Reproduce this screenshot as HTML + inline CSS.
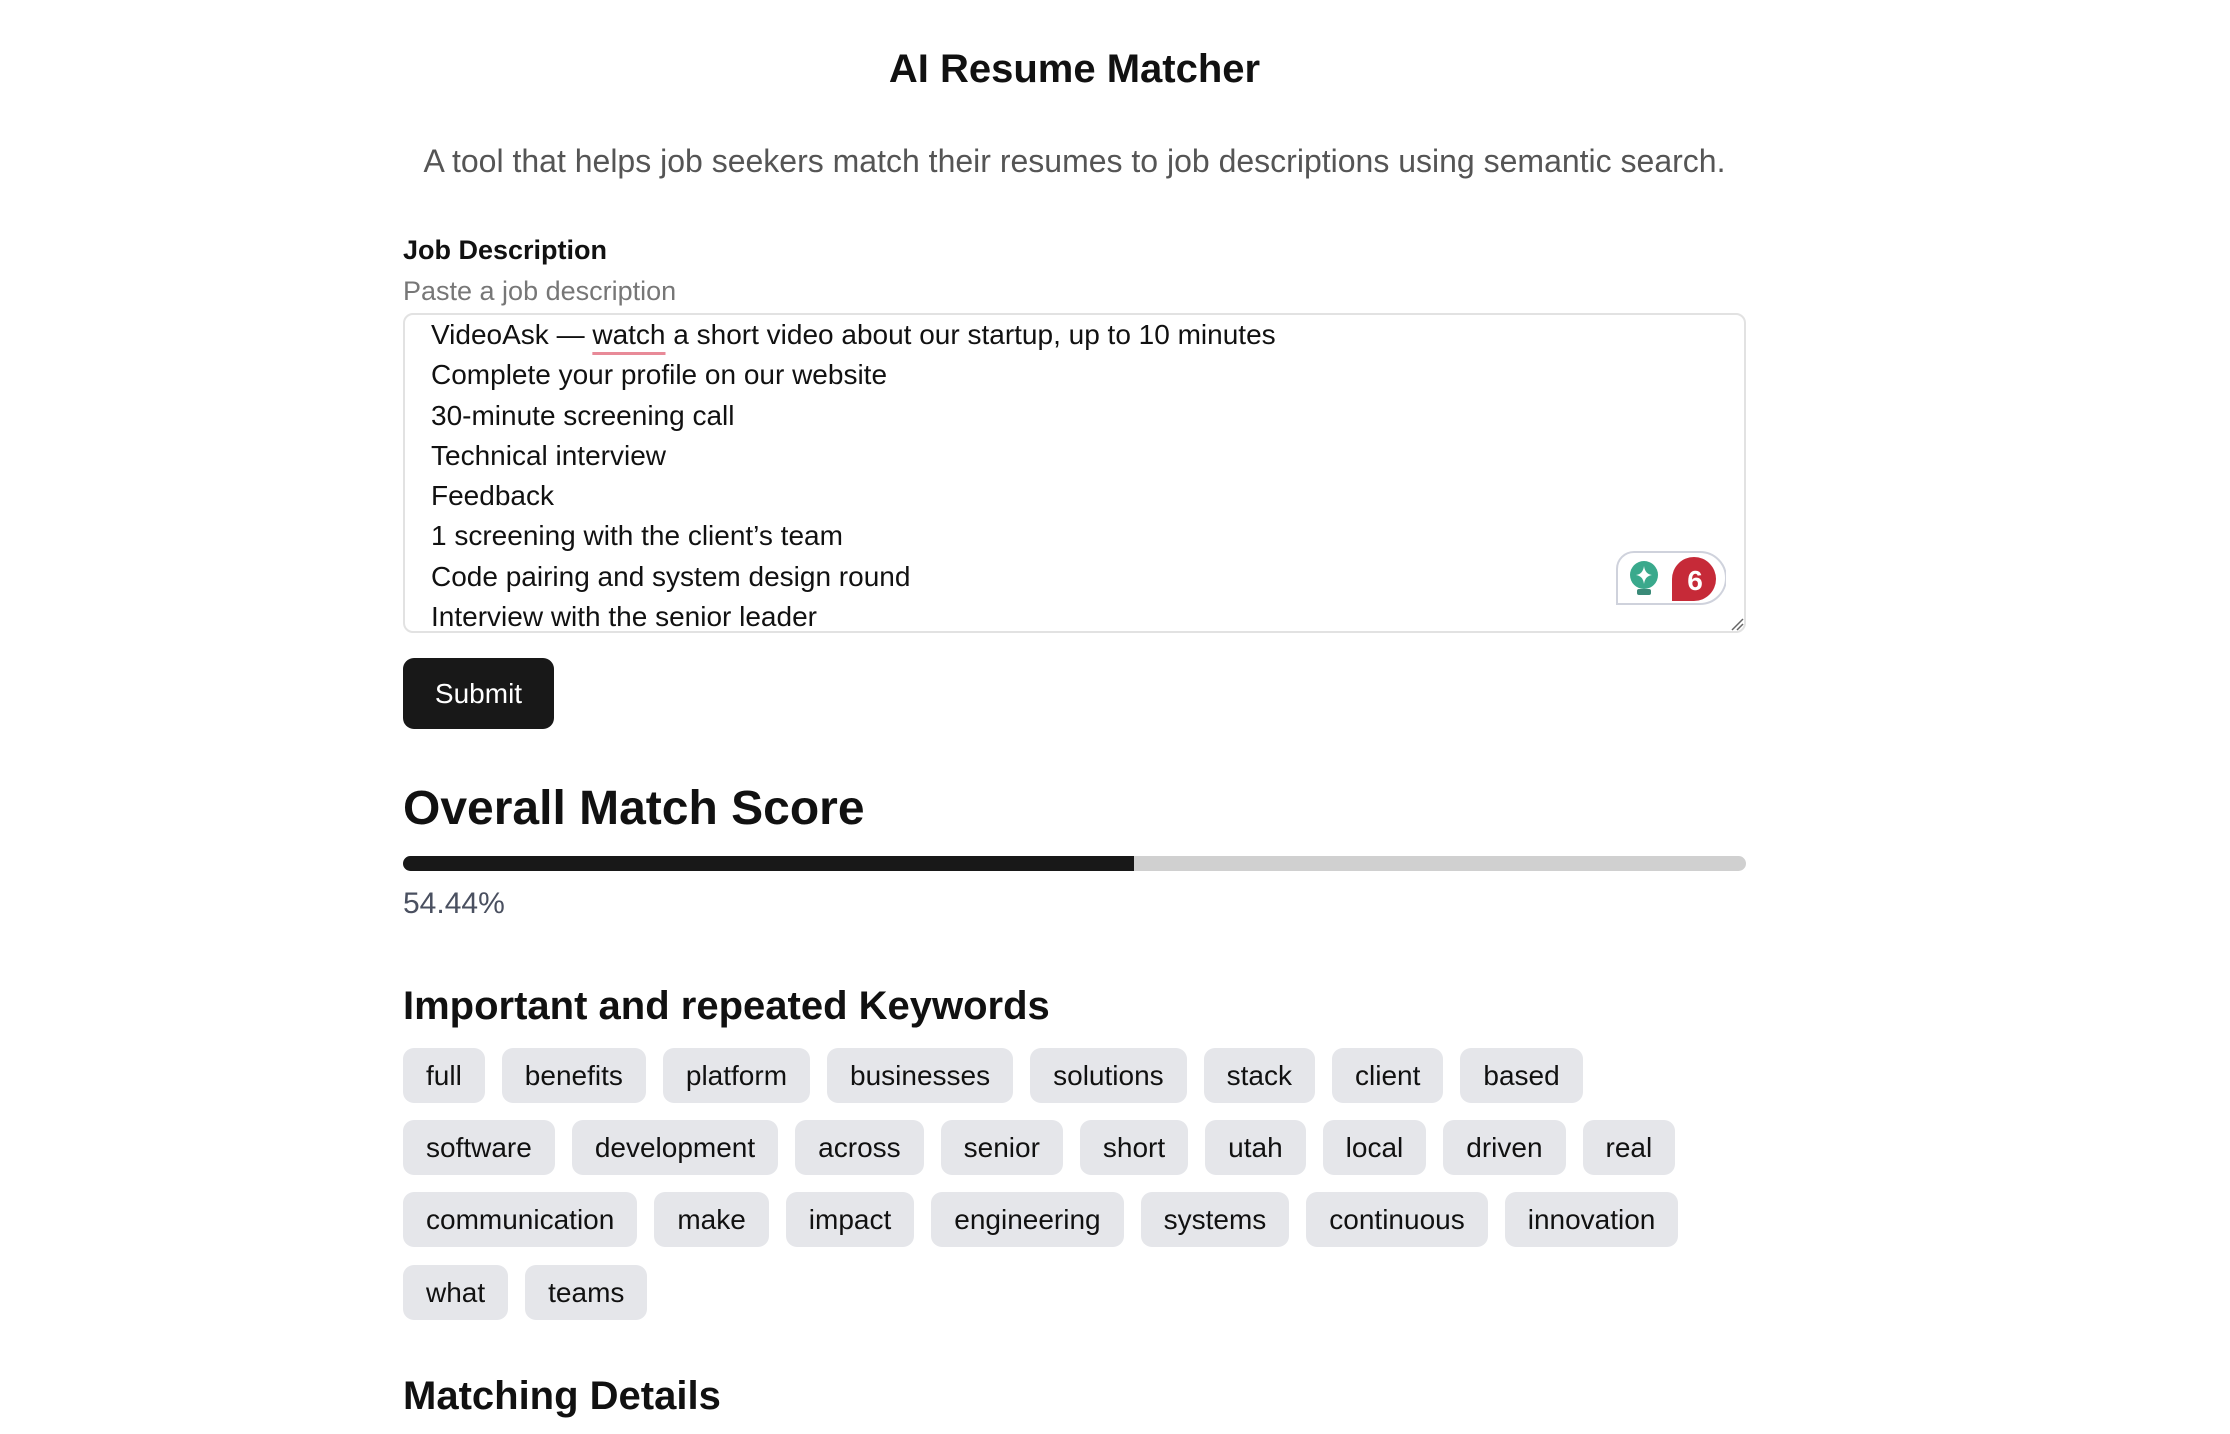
<!DOCTYPE html>
<html><head><meta charset="utf-8"><style>
*{box-sizing:border-box;margin:0;padding:0}
body{width:2230px;height:1434px;overflow:hidden;background:#fff;font-family:"Liberation Sans",Arial,sans-serif;color:#111;position:relative}
.wrap{position:absolute;left:403px;width:1343px;top:0}
h1{position:absolute;top:47px;left:0;width:100%;text-align:center;font-size:40px;font-weight:bold}
.sub{position:absolute;top:143px;left:0;width:100%;text-align:center;font-size:32px;color:#555}
.lbl{position:absolute;top:235px;font-size:27px;font-weight:bold}
.ph{position:absolute;top:276px;font-size:27px;color:#777}
.ta{position:absolute;top:313px;left:0;width:1343px;height:320px;border:2px solid #e2e2e2;border-radius:10px;padding:0 0 0 26px;overflow:hidden}
.ta div{font-size:28px;line-height:40.3px;white-space:nowrap;color:#111}
.wavy{text-decoration:underline;text-decoration-color:#e88a98;text-decoration-thickness:3px;text-underline-offset:8px}
.btn{position:absolute;top:658px;left:0;width:151px;height:71px;background:#181818;border-radius:11px;color:#fff;font-size:28px;line-height:71px;text-align:center}
h2{position:absolute;font-weight:bold}
.bar{position:absolute;top:856px;left:0;width:1343px;height:15px;border-radius:8px;background:#d0d0d0;overflow:hidden}
.bar div{width:731px;height:100%;background:#181818}
.pct{position:absolute;top:887px;font-size:30px;color:#4a5060}
.chips{position:absolute;left:0;width:1343px;display:flex;flex-wrap:wrap;gap:17px 17px}
.chips span{display:inline-block;height:55px;line-height:55px;padding:0 23px;background:#e5e6ea;border-radius:11px;font-size:28px;color:#111}
</style></head><body>
<div class="wrap">
<h1>AI Resume Matcher</h1>
<div class="sub">A tool that helps job seekers match their resumes to job descriptions using semantic search.</div>
<div class="lbl">Job Description</div>
<div class="ph">Paste a job description</div>
<div class="ta">
<div>VideoAsk — <span class="wavy">watch</span> a short video about our startup, up to 10 minutes</div>
<div>Complete your profile on our website</div>
<div>30-minute screening call</div>
<div>Technical interview</div>
<div>Feedback</div>
<div>1 screening with the client’s team</div>
<div>Code pairing and system design round</div>
<div>Interview with the senior leader</div>
</div>
<svg style="position:absolute;left:1211px;top:549px" width="112" height="62" viewBox="0 0 112 62">
<path d="M20 3 H86 A24 24 0 0 1 86 55 H3 V20 A17 17 0 0 1 20 3Z" fill="#fff" stroke="#cfd2dc" stroke-width="2"/>
<circle cx="30" cy="26" r="14" fill="#3aa98c"/>
<rect x="23" y="40" width="14" height="6" rx="2" fill="#3a8a78"/>
<path d="M30 17 Q31 25 38 26 Q31 27 30 35 Q29 27 22 26 Q29 25 30 17Z" fill="#fff"/>
<path d="M58 52 V30 A22 22 0 0 1 102 30 A22 22 0 0 1 80 52Z" fill="#c62a38"/>
<text x="81" y="41" font-size="28" font-weight="bold" fill="#fff" text-anchor="middle" font-family="Liberation Sans,sans-serif">6</text>
</svg>
<svg style="position:absolute;left:1327px;top:617px" width="14" height="14"><path d="M2 13 L13 2 M7 13 L13 7" stroke="#666" stroke-width="1.5"/></svg>
<div class="btn">Submit</div>
<h2 style="top:781px;font-size:48px">Overall Match Score</h2>
<div class="bar"><div></div></div>
<div class="pct">54.44%</div>
<h2 style="top:984px;font-size:40px">Important and repeated Keywords</h2>
<div class="chips" style="top:1048px"><span>full</span><span>benefits</span><span>platform</span><span>businesses</span><span>solutions</span><span>stack</span><span>client</span><span>based</span></div>
<div class="chips" style="top:1120px"><span>software</span><span>development</span><span>across</span><span>senior</span><span>short</span><span>utah</span><span>local</span><span>driven</span><span>real</span></div>
<div class="chips" style="top:1192px"><span>communication</span><span>make</span><span>impact</span><span>engineering</span><span>systems</span><span>continuous</span><span>innovation</span></div>
<div class="chips" style="top:1265px"><span>what</span><span>teams</span></div>
<h2 style="top:1374px;font-size:40px">Matching Details</h2>
</div>
</body></html>
